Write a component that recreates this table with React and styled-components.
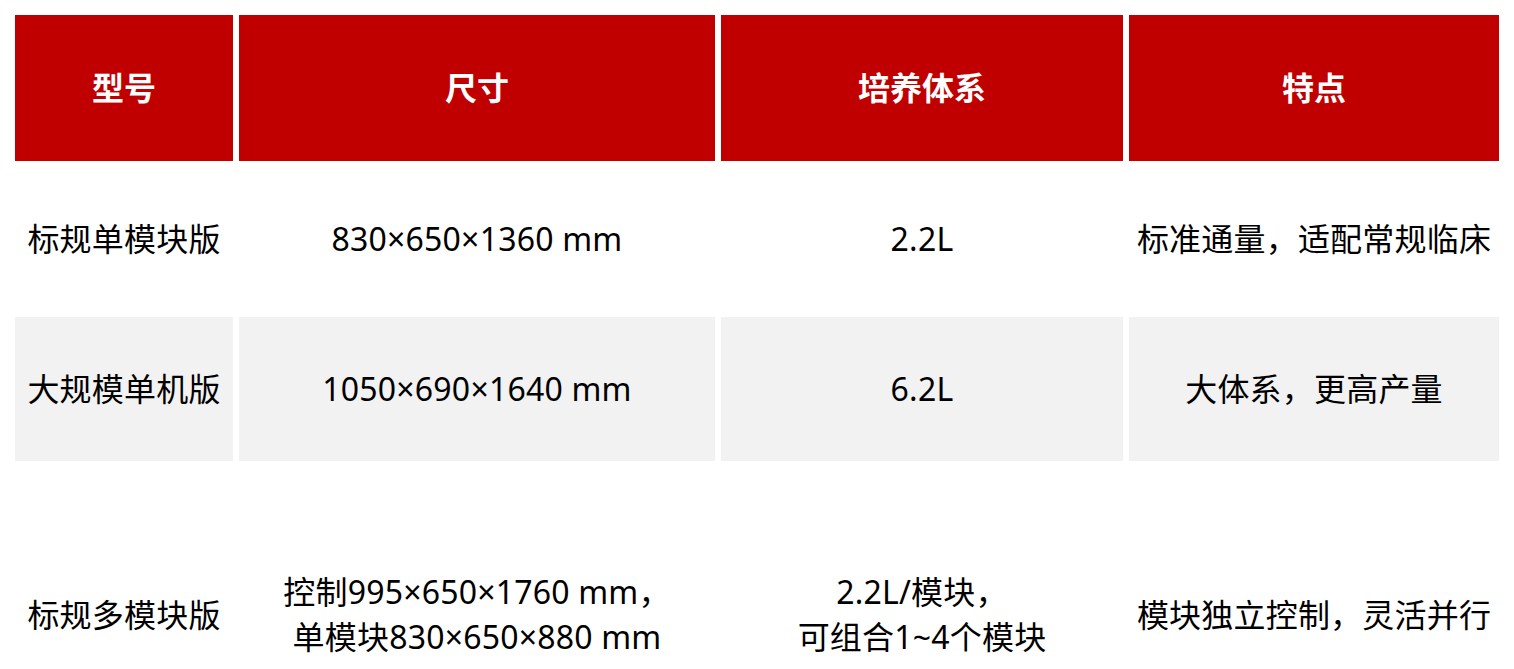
import styled, { createGlobalStyle } from "styled-components";

const GlobalStyle = createGlobalStyle`
  body {
    margin: 0;
    background: #fff;
    font-family: "Noto Sans", "Noto Sans CJK SC", sans-serif;
  }
`;

const headers = ["型号", "尺寸", "培养体系", "特点"];

const rows = [
  { shaded: false, height: 144, cells: [["标规单模块版"], ["830×650×1360 mm"], ["2.2L"], ["标准通量，适配常规临床"]] },
  { shaded: true, height: 144, cells: [["大规模单机版"], ["1050×690×1640 mm"], ["6.2L"], ["大体系，更高产量"]] },
  {
    shaded: false,
    height: 296,
    cells: [
      ["标规多模块版"],
      ["控制995×650×1760 mm，", "单模块830×650×880 mm"],
      ["2.2L/模块，", "可组合1~4个模块"],
      ["模块独立控制，灵活并行"],
    ],
  },
];

const App = () => (
  <>
    <GlobalStyle />
    <Table $rows={rows.map((r) => r.height)}>
      {headers.map((h) => (
        <HeadCell key={h}>{h}</HeadCell>
      ))}
      {rows.map((row, i) =>
        row.cells.map((lines, j) => (
          <Cell key={`${i}-${j}`} $shaded={row.shaded}>
            {lines.map((line) => (
              <Line key={line}>{line}</Line>
            ))}
          </Cell>
        ))
      )}
    </Table>
  </>
);

const Table = styled.div`
  display: grid;
  grid-template-columns: 218px 476px 402px 370px;
  grid-template-rows: 146px ${(p) => p.$rows.map((h) => `${h}px`).join(" ")};
  gap: 6px;
  padding: 15px;
`;

const HeadCell = styled.div`
  background: #c00000;
  color: #fff;
  font-weight: 700;
  font-size: 32px;
  line-height: 40px;
  display: flex;
  align-items: center;
  justify-content: center;
`;

const Cell = styled.div`
  background: ${(p) => (p.$shaded ? "#f2f2f2" : "#fff")};
  color: #000;
  font-size: 32px;
  display: flex;
  flex-direction: column;
  align-items: center;
  justify-content: center;
  text-align: center;
  line-height: 45px;
  padding-bottom: 2px;
`;

const Line = styled.div`
  white-space: nowrap;
  letter-spacing: 0.2px;
`;

export default App;
